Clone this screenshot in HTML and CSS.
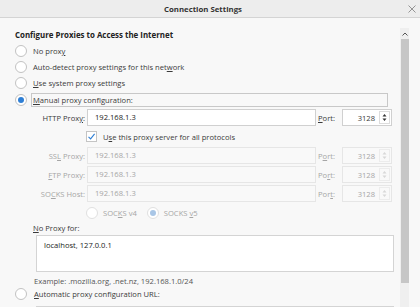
FILE: index.html
```html
<!DOCTYPE html>
<html>
<head>
<meta charset="utf-8">
<link rel="stylesheet" href="styles.css">
</head>
<body>
<div class="window">
  <div class="titlebar">
    <span></span>
    <span class="title">Connection Settings</span>
    <span class="close"><svg width="8" height="8" viewBox="0 0 8 8"><path d="M0.5 0.5L7.5 7.5M7.5 0.5L0.5 7.5" stroke="#8a8a8a" stroke-width="0.9" fill="none"/></svg></span>
  </div>
  <div class="main">
    <div class="content">
      <div class="heading">Configure Proxies to Access the Internet</div>
      <div class="radio-row"><span class="radio"></span><span class="lbl">No prox<u>y</u></span></div>
      <div class="radio-row"><span class="radio"></span><span class="lbl">Auto-detect proxy settings for this net<u>w</u>ork</span></div>
      <div class="radio-row"><span class="radio"></span><span class="lbl"><u>U</u>se system proxy settings</span></div>
      <div class="radio-row manual"><span class="radio checked"></span><span class="lbl focus"><u>M</u>anual proxy configuration:</span></div>

      <div class="proxy-grid">
        <span class="plabel">HTTP Prox<u>y</u>:</span>
        <span class="field">192.168.1.3</span>
        <span class="portlbl"><u>P</u>ort:</span>
        <span class="port"><span class="num">3128</span><span class="spin"><svg width="5" height="9" viewBox="0 0 5 9"><path d="M2.5 1L4.5 3.5H0.5Z M2.5 8L4.5 5.5H0.5Z" fill="#333"/></svg></span></span>

        <span class="checkrow"><span class="check"><svg width="9" height="9" viewBox="0 0 9 9"><path d="M1.5 4.8L3.6 6.9L7.6 1.8" stroke="#2f7fd5" stroke-width="1.1" fill="none"/></svg></span><span class="lbl">U<u>s</u>e this proxy server for all protocols</span></span>

        <span class="plabel dis">SS<u>L</u> Proxy:</span>
        <span class="field dis">192.168.1.3</span>
        <span class="portlbl dis">P<u>o</u>rt:</span>
        <span class="port dis"><span class="num">3128</span><span class="spin"><svg width="5" height="9" viewBox="0 0 5 9"><path d="M2.5 1L4.5 3.5H0.5Z M2.5 8L4.5 5.5H0.5Z" fill="#d8d8d8"/></svg></span></span>

        <span class="plabel dis"><u>F</u>TP Proxy:</span>
        <span class="field dis">192.168.1.3</span>
        <span class="portlbl dis">Po<u>r</u>t:</span>
        <span class="port dis"><span class="num">3128</span><span class="spin"><svg width="5" height="9" viewBox="0 0 5 9"><path d="M2.5 1L4.5 3.5H0.5Z M2.5 8L4.5 5.5H0.5Z" fill="#d8d8d8"/></svg></span></span>

        <span class="plabel dis">SO<u>C</u>KS Host:</span>
        <span class="field dis">192.168.1.3</span>
        <span class="portlbl dis">Por<u>t</u>:</span>
        <span class="port dis"><span class="num">3128</span><span class="spin"><svg width="5" height="9" viewBox="0 0 5 9"><path d="M2.5 1L4.5 3.5H0.5Z M2.5 8L4.5 5.5H0.5Z" fill="#d8d8d8"/></svg></span></span>

        <span class="socksrow">
          <span class="radio dis"></span><span class="lbl dis">SOC<u>K</u>S v4</span>
          <span class="radio dis checked v5"></span><span class="lbl dis">SOCKS <u>v</u>5</span>
        </span>
      </div>

      <div class="noproxy-lbl"><u>N</u>o Proxy for:</div>
      <div class="textarea">localhost, 127.0.0.1</div>
      <div class="example">Example: .mozilla.org, .net.nz, 192.168.1.0/24</div>
      <div class="radio-row auto"><span class="radio"></span><span class="lbl"><u>A</u>utomatic proxy configuration URL:</span></div>
      <div class="urlrow"><span class="urlfield"></span><span class="reload"></span></div>
    </div>
    <div class="scrollbar">
      <div class="sarrow"><svg width="6" height="4" viewBox="0 0 6 4"><path d="M0.5 3.5L3 1L5.5 3.5" stroke="#555" stroke-width="1" fill="none"/></svg></div>
      <div class="thumb"></div>
      <div class="track"></div>
    </div>
    <div class="gutter"></div>
  </div>
</div>
</body>
</html>
```

FILE: styles.css
```css
* { box-sizing: border-box; }
html, body { margin: 0; padding: 0; }
body {
  font-family: "Open Sans", "Noto Sans", sans-serif;
  font-size: 7.6px;
  color: #3a3a3a;
  background: #f8f8f8;
}
u { text-decoration: underline; text-underline-offset: 1px; text-decoration-thickness: 0.6px; }
.window { width: 420px; height: 307px; overflow: hidden; display: flex; flex-direction: column; background: #f8f8f8; }
.titlebar {
  height: 18px; flex: none;
  display: grid; grid-template-columns: 1fr auto 1fr; align-items: center;
  background: #ededed; border-bottom: 1px solid #d4d4d4;
  padding-right: 14px;
}
.title { font-weight: 700; color: #333; font-size: 7.8px; }
.close { justify-self: end; display: flex; margin-right: -10px; }
.main { flex: 1; display: flex; min-height: 0; }
.content { width: 400px; flex: none; padding: 11px 0 0 15px; }
.heading { height: 12px; line-height: 12px; font-weight: 700; color: #222; font-size: 7.9px; margin-bottom: 2px; }
.radio-row { height: 16px; display: flex; align-items: center; }
.radio-row.manual { margin-top: 1px; }
.radio {
  width: 12px; height: 12px; border-radius: 50%; flex: none;
  border: 1px solid #c2c2c2; background: #fff;
  display: inline-flex; align-items: center; justify-content: center;
}
.radio.checked::after { content: ""; width: 6px; height: 6px; border-radius: 50%; background: #2f7fd5; }
.radio.dis { border-color: #e0e0e0; }
.radio.dis.checked::after { background: #a9c6e6; }
.radio-row .lbl { margin-left: 6px; }
.focus { flex: 1; margin-left: 4px !important; margin-right: 12px; border: 1px solid #c8c8c8; padding: 0 1px; height: 14px; line-height: 12px; }
.proxy-grid {
  display: grid;
  grid-template-columns: 49px 229px 22px 50px;
  column-gap: 2px; row-gap: 2px;
  grid-auto-rows: 17px;
  margin-left: 21px; margin-top: 1px;
  align-items: center;
}
.plabel { text-align: right; }
.field { height: 17px; background: #fff; border: 1px solid #d0d0d0; padding-left: 7px; line-height: 15px; color: #222; }
.port { height: 17px; background: #fff; border: 1px solid #d0d0d0; display: flex; align-items: center; justify-content: flex-end; }
.port .num { margin-right: 4px; }
.spin { width: 11px; height: 13px; border: 1px solid #dcdcdc; display: flex; align-items: center; justify-content: center; margin-right: 1px; }
.dis { color: #a6a6a6; }
.field.dis, .port.dis { border-color: #e6e6e6; background: #f9f9f9; }
.port.dis .spin { border-color: #ececec; }
.checkrow { grid-column: 2 / 5; display: flex; align-items: center; margin-left: -1px; }
.check { width: 11px; height: 11px; border: 1px solid #c4c4c4; background: #fff; display: flex; align-items: center; justify-content: center; }
.checkrow .lbl { margin-left: 6px; }
.socksrow { grid-column: 2 / 5; display: flex; align-items: center; margin-left: -1px; }
.socksrow .lbl { margin-left: 5px; }
.socksrow .v5 { margin-left: 10px; }
.noproxy-lbl { margin-left: 18px; height: 13px; line-height: 13px; margin-top: 1px; }
.textarea { margin-left: 21px; width: 358px; height: 37px; background: #fff; border: 1px solid #d4d4d4; padding: 3px 7px; color: #222; line-height: 12px; }
.example { margin-left: 19px; height: 12px; line-height: 12px; margin-top: 3px; color: #555; }
.radio-row.auto { height: 14px; }
.radio-row.auto .lbl { margin-left: 7px; }
.urlrow { display: flex; margin-left: 21px; margin-top: 5px; height: 18px; }
.urlfield { width: 314px; background: #fff; border: 1px solid #d4d4d4; }
.reload { width: 44px; border: 1px solid #d4d4d4; border-bottom: none; background: #f4f4f4; }
.scrollbar { width: 9px; flex: none; margin-top: 10px; display: flex; flex-direction: column; background: #efefef; }
.sarrow { height: 11px; display: flex; align-items: center; justify-content: center; }
.thumb { height: 244px; background: #c6c6c6; margin: 0 0.5px; }
.track { flex: 1; }
.gutter { flex: 1; }
```
